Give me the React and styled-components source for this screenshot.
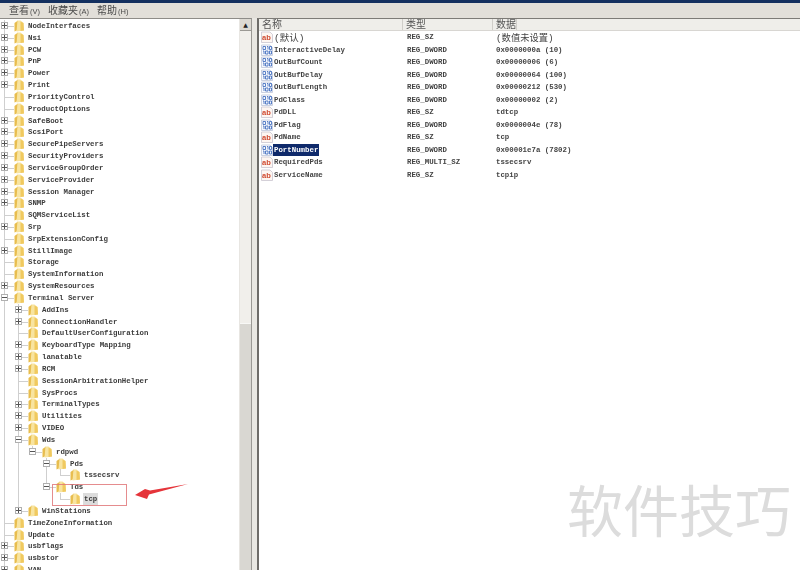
import React from 'react'
import styled, { createGlobalStyle } from 'styled-components'

const treeRows = [
  { name: 'NodeInterfaces', level: 0, exp: 'plus' },
  { name: 'Nsi', level: 0, exp: 'plus' },
  { name: 'PCW', level: 0, exp: 'plus' },
  { name: 'PnP', level: 0, exp: 'plus' },
  { name: 'Power', level: 0, exp: 'plus' },
  { name: 'Print', level: 0, exp: 'plus' },
  { name: 'PriorityControl', level: 0 },
  { name: 'ProductOptions', level: 0 },
  { name: 'SafeBoot', level: 0, exp: 'plus' },
  { name: 'ScsiPort', level: 0, exp: 'plus' },
  { name: 'SecurePipeServers', level: 0, exp: 'plus' },
  { name: 'SecurityProviders', level: 0, exp: 'plus' },
  { name: 'ServiceGroupOrder', level: 0, exp: 'plus' },
  { name: 'ServiceProvider', level: 0, exp: 'plus' },
  { name: 'Session Manager', level: 0, exp: 'plus' },
  { name: 'SNMP', level: 0, exp: 'plus' },
  { name: 'SQMServiceList', level: 0 },
  { name: 'Srp', level: 0, exp: 'plus' },
  { name: 'SrpExtensionConfig', level: 0 },
  { name: 'StillImage', level: 0, exp: 'plus' },
  { name: 'Storage', level: 0 },
  { name: 'SystemInformation', level: 0 },
  { name: 'SystemResources', level: 0, exp: 'plus' },
  { name: 'Terminal Server', level: 0, exp: 'minus' },
  { name: 'AddIns', level: 1, exp: 'plus', guides: [1] },
  { name: 'ConnectionHandler', level: 1, exp: 'plus', guides: [1] },
  { name: 'DefaultUserConfiguration', level: 1, guides: [1] },
  { name: 'KeyboardType Mapping', level: 1, exp: 'plus', guides: [1] },
  { name: 'lanatable', level: 1, exp: 'plus', guides: [1] },
  { name: 'RCM', level: 1, exp: 'plus', guides: [1] },
  { name: 'SessionArbitrationHelper', level: 1, guides: [1] },
  { name: 'SysProcs', level: 1, guides: [1] },
  { name: 'TerminalTypes', level: 1, exp: 'plus', guides: [1] },
  { name: 'Utilities', level: 1, exp: 'plus', guides: [1] },
  { name: 'VIDEO', level: 1, exp: 'plus', guides: [1] },
  { name: 'Wds', level: 1, exp: 'minus', guides: [1] },
  { name: 'rdpwd', level: 2, exp: 'minus', last: true, guides: [1, 1] },
  { name: 'Pds', level: 3, exp: 'minus', guides: [1, 1, 0] },
  { name: 'tssecsrv', level: 4, last: true, guides: [1, 1, 0, 1] },
  { name: 'Tds', level: 3, exp: 'minus', last: true, guides: [1, 1, 0] },
  { name: 'tcp', level: 4, last: true, active: true, guides: [1, 1, 0, 0] },
  { name: 'WinStations', level: 1, exp: 'plus', last: true, guides: [1] },
  { name: 'TimeZoneInformation', level: 0 },
  { name: 'Update', level: 0 },
  { name: 'usbflags', level: 0, exp: 'plus' },
  { name: 'usbstor', level: 0, exp: 'plus' },
  { name: 'VAN', level: 0, exp: 'plus' },
]

const values = [
  { name: '(默认)', type: 'REG_SZ', data: '(数值未设置)', sz: true, cjk: true },
  { name: 'InteractiveDelay', type: 'REG_DWORD', data: '0x0000000a (10)' },
  { name: 'OutBufCount', type: 'REG_DWORD', data: '0x00000006 (6)' },
  { name: 'OutBufDelay', type: 'REG_DWORD', data: '0x00000064 (100)' },
  { name: 'OutBufLength', type: 'REG_DWORD', data: '0x00000212 (530)' },
  { name: 'PdClass', type: 'REG_DWORD', data: '0x00000002 (2)' },
  { name: 'PdDLL', type: 'REG_SZ', data: 'tdtcp', sz: true },
  { name: 'PdFlag', type: 'REG_DWORD', data: '0x0000004e (78)' },
  { name: 'PdName', type: 'REG_SZ', data: 'tcp', sz: true },
  { name: 'PortNumber', type: 'REG_DWORD', data: '0x00001e7a (7802)', selected: true },
  { name: 'RequiredPds', type: 'REG_MULTI_SZ', data: 'tssecsrv', sz: true },
  { name: 'ServiceName', type: 'REG_SZ', data: 'tcpip', sz: true },
]

const Folder = () => (
  <FolderSvg viewBox="0 0 10 12">
    <path d="M0.5 3 L4 0.5 L4 10 L0.5 11.5 Z" fill="#e8bd4e" />
    <path d="M3.5 0.5 L6.5 0.5 L9.5 3 L10 10.5 L2.5 11.5 Z" fill="#f8e4a0" />
    <path d="M6.5 1.5 L9.5 3 L10 10.5 L6.5 11 Z" fill="#f0c95f" />
  </FolderSvg>
)

const StringIcon = () => (
  <TypeSvg viewBox="0 0 12 12">
    <path d="M0.5 1 H9 L11.5 3.5 V11.5 H0.5 Z" fill="#fdf6f2" stroke="#c3bfcc" strokeWidth="0.7" />
    <text x="1" y="9" fontFamily="Liberation Sans" fontWeight="700" fontSize="7.5" fill="#cf4a30">ab</text>
  </TypeSvg>
)

const BinaryIcon = () => (
  <TypeSvg viewBox="0 0 12 12">
    <path d="M0.5 1 H9 L11.5 3.5 V11.5 H0.5 Z" fill="#f6f8fd" stroke="#b7c0d6" strokeWidth="0.7" />
    <path d="M2 2.5 H4.5 V5.5 H2 Z M6 2.5 H7 V5.5 M8.5 2.5 H10.5 V5.5 H8.5 Z M2 7 H3 V10 M4.5 7 H7 V10 H4.5 Z M8.5 7 H10.5 V10 H8.5 Z" fill="none" stroke="#3d6cbd" strokeWidth="0.85" />
  </TypeSvg>
)

const App = () => (
  <Page>
    <GlobalStyle />
    <TitleEdge />
    <MenuBar>
      <MenuItem>查看<small>(V)</small></MenuItem>
      <MenuItem>收藏夹<small>(A)</small></MenuItem>
      <MenuItem>帮助<small>(H)</small></MenuItem>
    </MenuBar>
    <Body>
      <TreePane>
        <TreeList>
          {treeRows.map(row => (
            <TreeRow key={row.name}>
              {Array.from({ length: row.level }).map((_, i) => (
                <Guide key={i} $on={row.guides[i]} />
              ))}
              <Branch $last={row.last}>
                {row.exp && <Expander $minus={row.exp === 'minus'} />}
              </Branch>
              <Folder />
              <TreeLabel $active={row.active}>{row.name}</TreeLabel>
            </TreeRow>
          ))}
        </TreeList>
        <Scrollbar>
          <ScrollButton>▲</ScrollButton>
          <ScrollThumb />
        </Scrollbar>
      </TreePane>
      <Splitter />
      <ListPane>
        <Header>
          <HeadCell $w={144}>名称</HeadCell>
          <HeadCell $w={90}>类型</HeadCell>
          <HeadCell>数据</HeadCell>
        </Header>
        {values.map(value => (
          <ValueRow key={value.name}>
            <NameCell>
              {value.sz ? <StringIcon /> : <BinaryIcon />}
              <ValueName $selected={value.selected} $cjk={value.cjk}>{value.name}</ValueName>
            </NameCell>
            <TypeCell>{value.type}</TypeCell>
            <DataCell $cjk={value.cjk}>{value.data}</DataCell>
          </ValueRow>
        ))}
      </ListPane>
    </Body>
    <RedBox />
    <Arrow viewBox="0 0 56 20">
      <path d="M54 1 L16 7.5 L11 6 L1 12 L13 16 L15 11.5 Z" fill="#e5343a" />
    </Arrow>
    <Watermark>软件技巧</Watermark>
  </Page>
)

export default App

const GlobalStyle = createGlobalStyle`
  html, body {
    margin: 0;
    padding: 0;
    background: #fff;
  }
`
const Page = styled.div`
  position: relative;
  width: 800px;
  height: 570px;
  overflow: hidden;
  display: flex;
  flex-direction: column;
  font-family: "Liberation Mono", "Noto Sans CJK SC", monospace;
  color: #2a2a2a;
`
const TitleEdge = styled.div`
  height: 3px;
  background: #14305f;
`
const MenuBar = styled.div`
  height: 15px;
  display: flex;
  align-items: center;
  gap: 8px;
  padding-left: 9px;
  background: #e2dfd9;
`
const MenuItem = styled.span`
  font-family: "Noto Sans CJK SC", sans-serif;
  font-size: 10px;
  line-height: 13px;
  color: #4a4a4a;
  filter: blur(0.3px);
  small {
    font-family: "Liberation Sans", sans-serif;
    font-size: 7.5px;
    margin-left: 1px;
  }
`
const Body = styled.div`
  flex: 1;
  min-height: 0;
  display: flex;
`
const TreePane = styled.div`
  width: 252px;
  display: flex;
  border-top: 1px solid #8e8c88;
  border-right: 1px solid #9a9894;
  box-sizing: border-box;
  background: #fff;
  overflow: hidden;
`
const TreeList = styled.div`
  flex: 1;
  padding-top: 1px;
`
const TreeRow = styled.div`
  height: 11.83px;
  display: flex;
  align-items: center;
`
const Guide = styled.div`
  width: 14px;
  height: 100%;
  flex-shrink: 0;
  background: ${p => (p.$on ? 'linear-gradient(#cfcfcf, #cfcfcf) 4px 0 / 1px 100% no-repeat' : 'none')};
`
const Branch = styled.div`
  position: relative;
  width: 14px;
  height: 100%;
  flex-shrink: 0;
  &::before {
    content: '';
    position: absolute;
    left: 4px;
    top: 0;
    width: 1px;
    height: ${p => (p.$last ? '50%' : '100%')};
    background: #cfcfcf;
  }
  &::after {
    content: '';
    position: absolute;
    left: 4px;
    top: 50%;
    width: 10px;
    height: 1px;
    background: #cfcfcf;
  }
`
const Expander = styled.div`
  position: absolute;
  z-index: 1;
  left: 1px;
  top: 2px;
  width: 5px;
  height: 5px;
  border: 1px solid #b0b0b0;
  background:
    linear-gradient(#555, #555) center / 5px 1px no-repeat,
    ${p => (p.$minus ? 'none' : 'linear-gradient(#555, #555) center / 1px 5px no-repeat')},
    #fff;
  filter: blur(0.2px);
`
const FolderSvg = styled.svg`
  width: 10px;
  height: 12px;
  flex-shrink: 0;
  filter: blur(0.3px);
`
const TreeLabel = styled.span`
  margin-left: ${p => (p.$active ? '3px' : '4px')};
  padding: ${p => (p.$active ? '1px 1px' : 0)};
  background: ${p => (p.$active ? '#dcdcdc' : 'transparent')};
  font-size: 7.4px;
  font-weight: 700;
  line-height: 10px;
  white-space: pre;
  color: #3c3c3c;
  filter: blur(0.3px);
`
const Scrollbar = styled.div`
  width: 11px;
  display: flex;
  flex-direction: column;
  background: #f1efeb;
  border-left: 1px solid #e8e6e2;
`
const ScrollButton = styled.div`
  height: 11px;
  font-size: 6px;
  line-height: 11px;
  text-align: center;
  font-family: "DejaVu Sans", sans-serif;
  color: #222;
  background: #dcd9d2;
  border-bottom: 1px solid #9b9994;
`
const ScrollThumb = styled.div`
  margin-top: auto;
  height: 246px;
  background: #d9d7d2;
  border-top: 1px solid #f8f8f6;
`
const Splitter = styled.div`
  width: 5px;
  background: #e9e7e2;
`
const ListPane = styled.div`
  flex: 1;
  border-top: 1px solid #7d7b77;
  border-left: 2px solid #6e6c69;
  background: #fff;
`
const Header = styled.div`
  height: 11px;
  display: flex;
  background: #efeeea;
  border-bottom: 1px solid #d8d6d2;
`
const HeadCell = styled.div`
  width: ${p => (p.$w ? `${p.$w}px` : 'auto')};
  padding-left: 3px;
  box-sizing: border-box;
  font-family: "Noto Sans CJK SC", sans-serif;
  font-size: 10px;
  line-height: 9px;
  color: #555;
  border-right: 1px solid #d0cec9;
  filter: blur(0.3px);
`
const ValueRow = styled.div`
  height: 12.5px;
  display: flex;
  align-items: center;
  font-size: 7.4px;
  font-weight: 700;
  color: #444;
`
const NameCell = styled.div`
  width: 144px;
  display: flex;
  align-items: center;
  padding-left: 2px;
  box-sizing: border-box;
`
const TypeSvg = styled.svg`
  width: 12px;
  height: 12px;
  flex-shrink: 0;
  filter: blur(0.25px);
`
const ValueName = styled.span`
  padding: ${p => (p.$cjk ? '5px 1px 1px' : '1px')};
  line-height: 10px;
  background: ${p => (p.$selected ? '#0f2a6b' : 'transparent')};
  color: ${p => (p.$selected ? '#fff' : 'inherit')};
  font-size: ${p => (p.$cjk ? '9.5px' : 'inherit')};
  font-weight: ${p => (p.$cjk ? 400 : 700)};
  filter: blur(0.3px);
`
const TypeCell = styled.div`
  width: 89px;
  padding-left: 4px;
  box-sizing: border-box;
  filter: blur(0.3px);
`
const DataCell = styled.div`
  padding: ${p => (p.$cjk ? '4px 0 0 4px' : '0 0 0 4px')};
  white-space: pre;
  line-height: 10px;
  font-size: ${p => (p.$cjk ? '9.3px' : 'inherit')};
  font-weight: ${p => (p.$cjk ? 400 : 700)};
  filter: blur(0.3px);
`
const RedBox = styled.div`
  position: absolute;
  left: 52px;
  top: 484px;
  width: 73px;
  height: 20px;
  border: 1px solid #e0787a;
  opacity: 0.85;
`
const Arrow = styled.svg`
  position: absolute;
  left: 134px;
  top: 483px;
  width: 56px;
  height: 20px;
  filter: blur(0.3px);
`
const Watermark = styled.div`
  position: absolute;
  left: 567px;
  top: 471px;
  font-family: "Noto Sans CJK SC", sans-serif;
  font-size: 56px;
  line-height: 74px;
  color: #dcdcdc;
  white-space: nowrap;
`
